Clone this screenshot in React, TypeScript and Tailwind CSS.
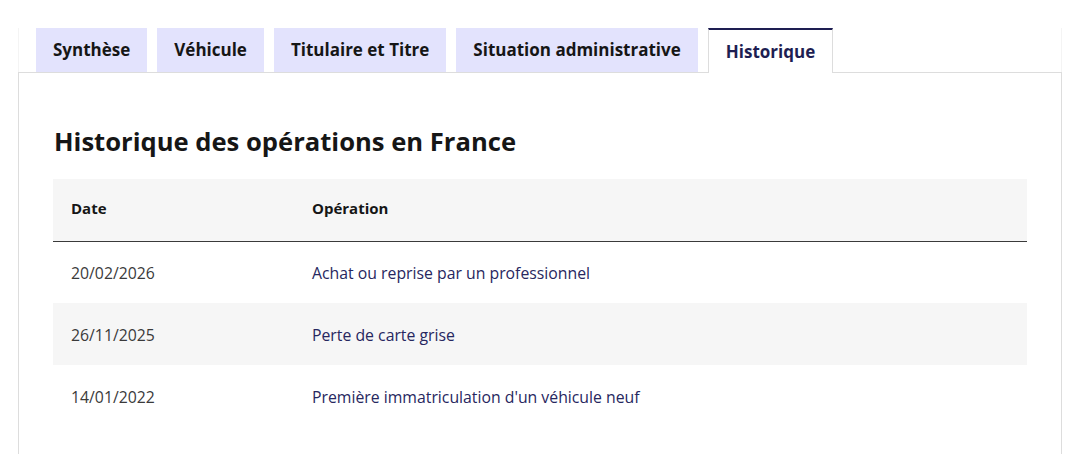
import React from "react";

const tabs = ["Synthèse", "Véhicule", "Titulaire et Titre", "Situation administrative", "Historique"];
const rows = [
  ["20/02/2026", "Achat ou reprise par un professionnel"],
  ["26/11/2025", "Perte de carte grise"],
  ["14/01/2022", "Première immatriculation d'un véhicule neuf"],
];

export default function App() {
  return (
    <div className="w-full h-[454px] overflow-hidden bg-white" style={{ fontFamily: "'Open Sans', 'Noto Sans', sans-serif" }}>
      <div className="pt-[28px] pl-[18px] pr-[17px]">
        <div className="flex items-end gap-[10px] pl-[17px] border-x border-[#f4f4f4]">
          {tabs.map((t, i) =>
            i === tabs.length - 1 ? (
              <div
                key={t}
                className="relative -mb-px h-[45px] bg-white border-t-2 border-t-[#1e1e52] border-x border-x-[#dddddd] px-[17px] flex items-center text-[17px] font-bold text-[#1e1e52] z-10"
              >
                {t}
              </div>
            ) : (
              <div
                key={t}
                className="h-[44px] bg-[#e3e3fd] px-[17px] flex items-center text-[17px] font-bold text-[#161616]"
              >
                {t}
              </div>
            )
          )}
        </div>
        <div className="border border-[#dddddd] px-[34px] pt-[53px] h-[400px]">
          <h3 className="ml-px text-[25.6px] leading-[32px] font-bold text-[#161616]">Historique des opérations en France</h3>
          <table className="mt-[21px] w-full border-collapse text-[15px]">
            <thead>
              <tr className="bg-[#f6f6f6] border-b border-[#3a3a3a]">
                <th className="w-[241px] h-[62px] pl-[18px] pb-[3px] text-left font-bold text-[#161616]">Date</th>
                <th className="h-[62px] pl-[18px] pb-[3px] text-left font-bold text-[#161616]">Opération</th>
              </tr>
            </thead>
            <tbody className="text-[15.8px]">
              {rows.map((r, i) => (
                <tr key={r[0]} className={i % 2 === 1 ? "bg-[#f6f6f6]" : "bg-white"}>
                  <td className="h-[62px] pl-[18px] pt-[3px] text-[#3a3a3a]">{r[0]}</td>
                  <td className="h-[62px] pl-[18px] pt-[3px] text-[#272760]">{r[1]}</td>
                </tr>
              ))}
            </tbody>
          </table>
        </div>
      </div>
    </div>
  );
}
